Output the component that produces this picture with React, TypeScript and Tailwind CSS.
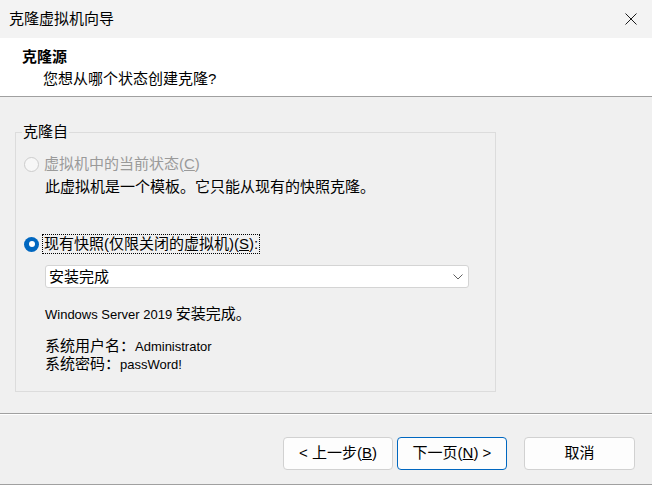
export default function App() {
  return (
    <div className="w-[652px] h-[485px] bg-[#f0f0f0] flex flex-col text-[15px] text-black font-['Liberation_Sans','Noto_Sans_CJK_SC',sans-serif] border-b border-[#a0a0a0]">
      {/* title bar */}
      <div className="h-[38px] shrink-0 flex items-center justify-between pl-[9px] pr-[15px] bg-[#f3f3f3]">
        <span className="leading-[20px]">克隆虚拟机向导</span>
        <svg width="12" height="12" viewBox="0 0 12 12">
          <path d="M0.5 0.5 L11.5 11.5 M11.5 0.5 L0.5 11.5" stroke="#1a1a1a" strokeWidth="1" />
        </svg>
      </div>

      {/* header */}
      <div className="h-[59px] shrink-0 bg-white border-b border-[#a0a0a0] pt-[8px] pl-[22px] leading-[22px]">
        <div className="font-bold">克隆源</div>
        <div className="pl-[21px]">您想从哪个状态创建克隆?</div>
      </div>

      {/* body */}
      <div className="pt-[25px] px-[15px]">
        <fieldset className="w-[481px] border border-[#dcdcdc] pb-[18px]">
          <legend className="ml-[6px] px-[1px] leading-[20px]">克隆自</legend>
          <div className="pt-[12px] pl-[8px] flex flex-col">
            <div className="flex items-center h-[20px] gap-[5px] text-[#9a9a9a]">
              <span className="w-[15px] h-[15px] rounded-full border border-[#cccccc] bg-[#f7f7f7]" />
              <span className="leading-[20px]">
                虚拟机中的当前状态(<span className="underline">C</span>)
              </span>
            </div>
            <div className="mt-[3px] pl-[21px] leading-[20px]">此虚拟机是一个模板。它只能从现有的快照克隆。</div>

            <div className="mt-[37px] flex items-center h-[20px] gap-[3px]">
              <span className="w-[15px] h-[15px] rounded-full bg-[#0067c0] flex items-center justify-center">
                <span className="w-[6px] h-[6px] rounded-full bg-white" />
              </span>
              <span className="border border-dotted border-black px-[1px] leading-[18px]">
                现有快照(仅限关闭的虚拟机)(<span className="underline">S</span>):
              </span>
            </div>

            <div className="mt-[11px] ml-[21px] w-[424px] h-[23px] bg-white border border-[#d4d4d4] rounded-[3px] flex items-center justify-between pl-[3px] pr-[5px]">
              <span className="leading-[20px]">安装完成</span>
              <svg width="10" height="6" viewBox="0 0 10 6">
                <path d="M0.5 0.5 L5 5 L9.5 0.5" stroke="#606060" strokeWidth="1" fill="none" />
              </svg>
            </div>

            <div className="mt-[17px] ml-[21px] leading-[18px]">
              <span className="text-[13px]">Windows Server 2019 </span>安装完成。
            </div>
            <div className="mt-[13px] ml-[21px] leading-[17px]">
              <div>
                系统用户名：<span className="text-[13px]">Administrator</span>
              </div>
              <div>
                系统密码：<span className="text-[13px]">passWord!</span>
              </div>
            </div>
          </div>
        </fieldset>
      </div>

      {/* separator */}
      <div className="mt-[21px] h-[2px] border-t border-[#a0a0a0] bg-white" />

      {/* buttons */}
      <div className="mt-[22px] flex justify-end pr-[17px]">
        <button className="w-[110px] h-[33px] rounded-[4px] border border-[#d1d1d1] bg-[#fdfdfd]">
          &lt; 上一步(<span className="underline">B</span>)
        </button>
        <button className="ml-[4px] w-[110px] h-[33px] rounded-[4px] border border-[#0067c0] bg-[#fdfdfd]">
          下一页(<span className="underline">N</span>) &gt;
        </button>
        <button className="ml-[17px] w-[111px] h-[33px] rounded-[4px] border border-[#d1d1d1] bg-[#fdfdfd]">
          取消
        </button>
      </div>
    </div>
  );
}
